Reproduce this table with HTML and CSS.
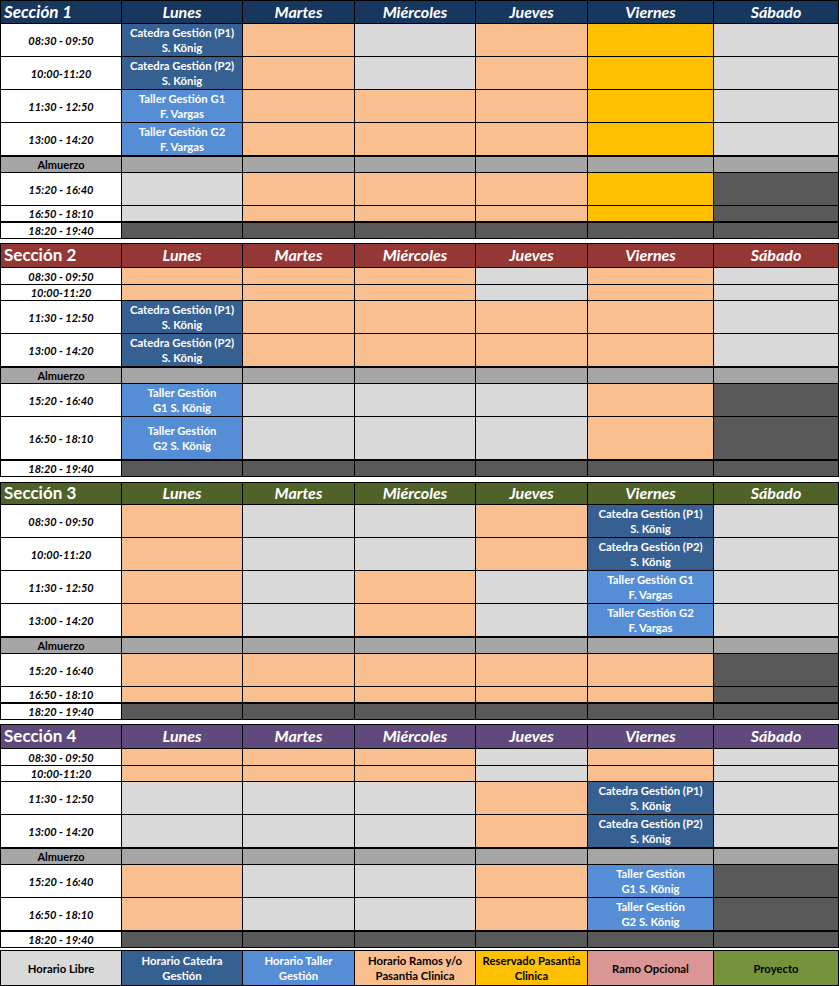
FILE: index.html
```html
<!DOCTYPE html>
<html lang="es">
<head>
<meta charset="utf-8">
<title>Horario</title>
<link rel="stylesheet" href="styles.css">
</head>
<body>
<div class="page">

<div class="sec s1">
  <div class="hd title it">Sección 1</div><div class="hd">Lunes</div><div class="hd">Martes</div><div class="hd">Miércoles</div><div class="hd">Jueves</div><div class="hd">Viernes</div><div class="hd">Sábado</div>

  <div class="t">08:30 - 09:50</div><div class="c">Catedra Gestión (P1)<br>S. König</div><div class="p"></div><div class="g"></div><div class="p"></div><div class="y"></div><div class="g"></div>
  <div class="t">10:00-11:20</div><div class="c">Catedra Gestión (P2)<br>S. König</div><div class="p"></div><div class="g"></div><div class="p"></div><div class="y"></div><div class="g"></div>
  <div class="t">11:30 - 12:50</div><div class="w">Taller Gestión G1<br>F. Vargas</div><div class="p"></div><div class="p"></div><div class="p"></div><div class="y"></div><div class="g"></div>
  <div class="t">13:00 - 14:20</div><div class="w">Taller Gestión G2<br>F. Vargas</div><div class="p"></div><div class="p"></div><div class="p"></div><div class="y"></div><div class="g"></div>
  <div class="a lunch th">Almuerzo</div><div class="a th"></div><div class="a th"></div><div class="a th"></div><div class="a th"></div><div class="a th"></div><div class="a th"></div>
  <div class="t">15:20 - 16:40</div><div class="g"></div><div class="p"></div><div class="p"></div><div class="p"></div><div class="y"></div><div class="d"></div>
  <div class="t">16:50 - 18:10</div><div class="g"></div><div class="p"></div><div class="p"></div><div class="p"></div><div class="y"></div><div class="d"></div>
  <div class="t th">18:20 - 19:40</div><div class="d th"></div><div class="d th"></div><div class="d th"></div><div class="d th"></div><div class="d th"></div><div class="d th"></div>
</div>

<div class="sec s2">
  <div class="hd title">Sección 2</div><div class="hd">Lunes</div><div class="hd">Martes</div><div class="hd">Miércoles</div><div class="hd">Jueves</div><div class="hd">Viernes</div><div class="hd">Sábado</div>

  <div class="t">08:30 - 09:50</div><div class="p"></div><div class="p"></div><div class="p"></div><div class="g"></div><div class="p"></div><div class="g"></div>
  <div class="t">10:00-11:20</div><div class="p"></div><div class="p"></div><div class="p"></div><div class="g"></div><div class="p"></div><div class="g"></div>
  <div class="t">11:30 - 12:50</div><div class="c">Catedra Gestión (P1)<br>S. König</div><div class="p"></div><div class="p"></div><div class="p"></div><div class="p"></div><div class="g"></div>
  <div class="t">13:00 - 14:20</div><div class="c">Catedra Gestión (P2)<br>S. König</div><div class="p"></div><div class="p"></div><div class="p"></div><div class="p"></div><div class="g"></div>
  <div class="a lunch th">Almuerzo</div><div class="a th"></div><div class="a th"></div><div class="a th"></div><div class="a th"></div><div class="a th"></div><div class="a th"></div>
  <div class="t">15:20 - 16:40</div><div class="w">Taller Gestión<br>G1 S. König</div><div class="g"></div><div class="g"></div><div class="g"></div><div class="p"></div><div class="d"></div>
  <div class="t">16:50 - 18:10</div><div class="w">Taller Gestión<br>G2 S. König</div><div class="g"></div><div class="g"></div><div class="g"></div><div class="p"></div><div class="d"></div>
  <div class="t th">18:20 - 19:40</div><div class="d th"></div><div class="d th"></div><div class="d th"></div><div class="d th"></div><div class="d th"></div><div class="d th"></div>
</div>

<div class="sec s3">
  <div class="hd title">Sección 3</div><div class="hd">Lunes</div><div class="hd">Martes</div><div class="hd">Miércoles</div><div class="hd">Jueves</div><div class="hd">Viernes</div><div class="hd">Sábado</div>

  <div class="t">08:30 - 09:50</div><div class="p"></div><div class="g"></div><div class="g"></div><div class="p"></div><div class="c">Catedra Gestión (P1)<br>S. König</div><div class="g"></div>
  <div class="t">10:00-11:20</div><div class="p"></div><div class="g"></div><div class="g"></div><div class="p"></div><div class="c">Catedra Gestión (P2)<br>S. König</div><div class="g"></div>
  <div class="t">11:30 - 12:50</div><div class="p"></div><div class="g"></div><div class="p"></div><div class="g"></div><div class="w">Taller Gestión G1<br>F. Vargas</div><div class="g"></div>
  <div class="t">13:00 - 14:20</div><div class="p"></div><div class="g"></div><div class="p"></div><div class="g"></div><div class="w">Taller Gestión G2<br>F. Vargas</div><div class="g"></div>
  <div class="a lunch th">Almuerzo</div><div class="a th"></div><div class="a th"></div><div class="a th"></div><div class="a th"></div><div class="a th"></div><div class="a th"></div>
  <div class="t">15:20 - 16:40</div><div class="p"></div><div class="p"></div><div class="p"></div><div class="p"></div><div class="p"></div><div class="d"></div>
  <div class="t">16:50 - 18:10</div><div class="p"></div><div class="p"></div><div class="p"></div><div class="p"></div><div class="p"></div><div class="d"></div>
  <div class="t th">18:20 - 19:40</div><div class="d th"></div><div class="d th"></div><div class="d th"></div><div class="d th"></div><div class="d th"></div><div class="d th"></div>
</div>

<div class="sec s4">
  <div class="hd title">Sección 4</div><div class="hd">Lunes</div><div class="hd">Martes</div><div class="hd">Miércoles</div><div class="hd">Jueves</div><div class="hd">Viernes</div><div class="hd">Sábado</div>

  <div class="t">08:30 - 09:50</div><div class="p"></div><div class="p"></div><div class="p"></div><div class="g"></div><div class="p"></div><div class="g"></div>
  <div class="t">10:00-11:20</div><div class="p"></div><div class="p"></div><div class="p"></div><div class="g"></div><div class="p"></div><div class="g"></div>
  <div class="t">11:30 - 12:50</div><div class="g"></div><div class="g"></div><div class="g"></div><div class="p"></div><div class="c">Catedra Gestión (P1)<br>S. König</div><div class="g"></div>
  <div class="t">13:00 - 14:20</div><div class="g"></div><div class="g"></div><div class="g"></div><div class="p"></div><div class="c">Catedra Gestión (P2)<br>S. König</div><div class="g"></div>
  <div class="a lunch th">Almuerzo</div><div class="a th"></div><div class="a th"></div><div class="a th"></div><div class="a th"></div><div class="a th"></div><div class="a th"></div>
  <div class="t">15:20 - 16:40</div><div class="p"></div><div class="g"></div><div class="g"></div><div class="p"></div><div class="w">Taller Gestión<br>G1 S. König</div><div class="d"></div>
  <div class="t">16:50 - 18:10</div><div class="p"></div><div class="g"></div><div class="g"></div><div class="p"></div><div class="w">Taller Gestión<br>G2 S. König</div><div class="d"></div>
  <div class="t th">18:20 - 19:40</div><div class="d th"></div><div class="d th"></div><div class="d th"></div><div class="d th"></div><div class="d th"></div><div class="d th"></div>
</div>

<div class="legend">
  <div class="g lg">Horario Libre</div>
  <div class="c lg">Horario Catedra<br>Gestión</div>
  <div class="w lg">Horario Taller<br>Gestión</div>
  <div class="p lg">Horario Ramos y/o<br>Pasantia Clinica</div>
  <div class="y lg">Reservado Pasantia<br>Clinica</div>
  <div class="r lg">Ramo Opcional</div>
  <div class="v lg">Proyecto</div>
</div>

</div>
</body>
</html>
```

FILE: styles.css
```css
* { box-sizing: border-box; }

body {
  margin: 0;
  background: #ffffff;
  font-family: "Lato", "Open Sans", sans-serif;
}

.page {
  width: 840px;
  display: flex;
  flex-direction: column;
}

.sec, .legend {
  width: 839px;
  display: grid;
  grid-template-columns: 120px 120px 111px 120px 111px 125px 124px;
  gap: 1px;
  padding: 1px;
  background: #000000;
}

.s1 { grid-template-rows: 22px 32px 32px 32px 32px 16px 32px 15px 16px; }
.s2 { grid-template-rows: 23px 16px 15px 32px 32px 16px 32px 42px 16px; margin-top: 4px; }
.s3 { grid-template-rows: 21px 32px 32px 32px 32px 16px 32px 15px 16px; margin-top: 5px; }
.s4 { grid-template-rows: 23px 16px 15px 32px 32px 16px 32px 32px 16px; margin-top: 4px; }

.legend { grid-template-rows: 34px; margin-top: 2px; }

.sec > div, .legend > div {
  display: flex;
  align-items: center;
  justify-content: center;
  text-align: center;
  overflow: hidden;
}

.hd {
  color: #ffffff;
  font-weight: 700;
  font-style: italic;
  font-size: 16px;
  padding-bottom: 2px;
}
.s1 .hd { background: #17375e; }
.s2 .hd { background: #953735; }
.s3 .hd { background: #4f6228; }
.s4 .hd { background: #604a7b; }

.sec > .title {
  justify-content: flex-start;
  padding-left: 3px;
  font-size: 17px;
  font-style: normal;
}
.sec > .title.it { font-style: italic; }

.t {
  background: #ffffff;
  color: #000000;
  font-weight: 700;
  font-style: italic;
  font-size: 11px;
}

.lunch {
  color: #000000;
  font-weight: 700;
  font-size: 11px;
}

.th { border-top: 1px solid #000000; }

.c, .w {
  color: #ffffff;
  font-weight: 700;
  font-size: 11.3px;
  line-height: 15px;
}
.c { background: #366092; }
.w { background: #558ed5; }

.p { background: #fabf8f; }
.g { background: #d9d9d9; }
.y { background: #ffc000; }
.d { background: #595959; }
.a { background: #a6a6a6; }
.r { background: #da9694; }
.v { background: #76933c; }

.lg {
  font-weight: 700;
  font-size: 11.3px;
  line-height: 15px;
  color: #000000;
}
.legend > .c, .legend > .w { color: #ffffff; }
```
